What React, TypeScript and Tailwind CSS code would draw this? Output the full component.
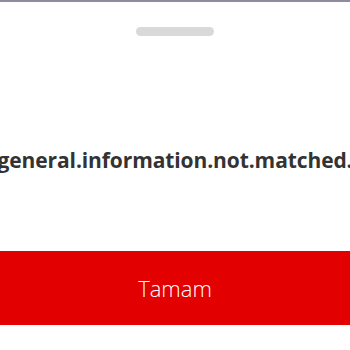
export default function App() {
  return (
    <main className="flex h-[350px] w-[350px] flex-col overflow-hidden bg-white font-['Open_Sans',sans-serif]">
      <div className="h-[2px] w-full bg-[#8e8c9e]" />
      <div className="flex justify-center pt-[25px]">
        <div className="h-[9px] w-[78px] rounded-full bg-[#d9d9d9]" />
      </div>
      <div className="flex h-[215px] items-center justify-center pt-[34px]">
        <p className="whitespace-nowrap text-[21px] font-bold tracking-[-0.1px] text-[#333333]">
          general.information.not.matched.
        </p>
      </div>
      <button className="flex h-[74px] w-full items-center justify-center bg-[#e30000] text-[22px] font-light text-white">
        Tamam
      </button>
    </main>
  );
}
